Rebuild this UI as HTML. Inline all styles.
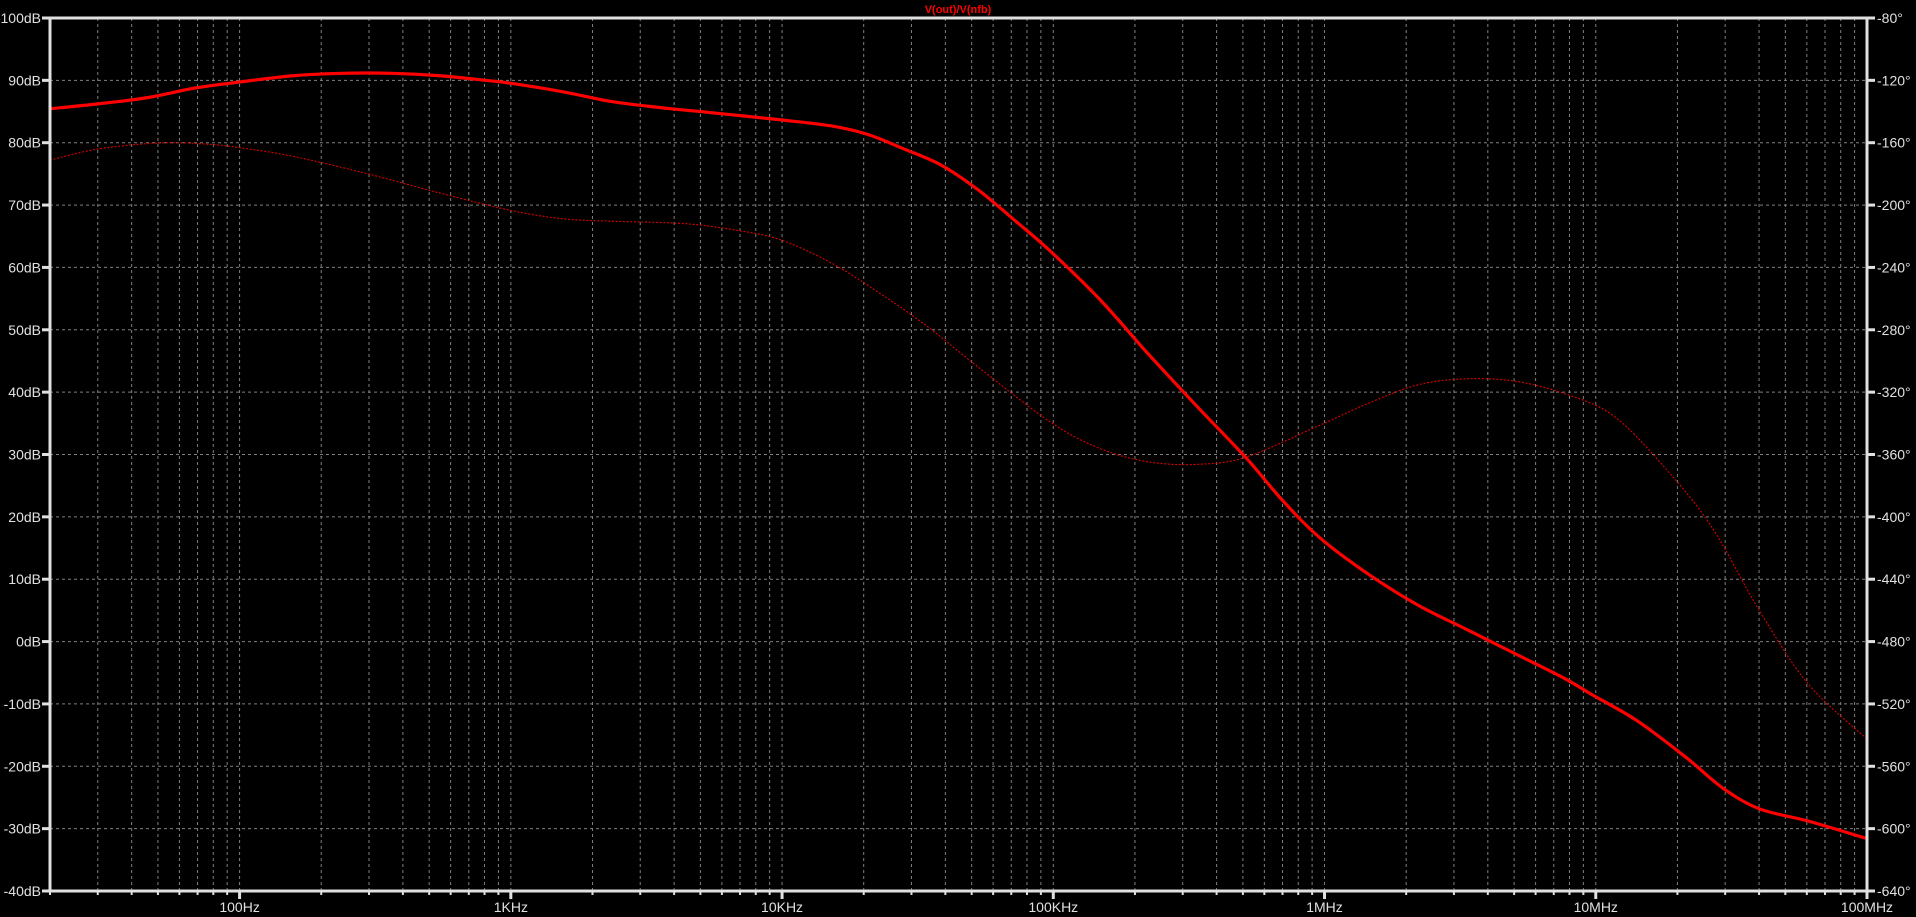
<!DOCTYPE html>
<html><head><meta charset="utf-8"><style>
html,body{margin:0;padding:0;background:#000;overflow:hidden}
svg{display:block}
text{font-family:"Liberation Sans",sans-serif;font-size:14px;fill:#e0e0e0}
</style></head><body>
<svg id="s" width="1916" height="917" xmlns="http://www.w3.org/2000/svg">
<rect width="1916" height="917" fill="#000"/>
<g id="grid"></g>
<g transform="scale(1.22194)">
<path id="ph" fill="none" stroke="#e00000" stroke-width="0.9" stroke-dasharray="1.6,1.4"/>
<path id="mg" fill="none" stroke="#ff0000" stroke-width="2.6" stroke-linejoin="round" stroke-linecap="round"/>
</g>
<text x="958" y="13" text-anchor="middle" style="fill:#ff0000;font-size:11px;font-weight:bold">V(out)/V(nfb)</text>
<g id="axes"></g>
</svg>
<script>
var NS="http://www.w3.org/2000/svg";
function smooth(s){var p=s.trim().split(/\s+/).map(function(q){return q.split(',').map(Number)});
 var d='M'+p[0][0]+','+p[0][1];
 for(var i=0;i<p.length-1;i++){var p0=p[i-1]||p[i],p1=p[i],p2=p[i+1],p3=p[i+2]||p2;
  var c1x=p1[0]+(p2[0]-p0[0])/6,c1y=p1[1]+(p2[1]-p0[1])/6,c2x=p2[0]-(p3[0]-p1[0])/6,c2y=p2[1]-(p3[1]-p1[1])/6;
  d+=' C'+c1x+','+c1y+' '+c2x+','+c2y+' '+p2[0]+','+p2[1];}
 return d;}
document.getElementById('ph').setAttribute('d',smooth("41,131 80,122 130,117 170,118 197,121 240,128 300,142 360,158 417,172 460,179 500,181 560,183 600,188 638,196 680,215 720,240 760,268 800,300 859,345 900,367 940,378 980,380 1020,374 1080,348 1120,330 1160,315 1200,310 1240,312 1280,322 1320,340 1360,380 1400,430 1440,500 1480,560 1527,604"));
document.getElementById('mg').setAttribute('d',smooth("41,89 80,85 120,80 160,72 197,67 240,62 280,60 320,60 360,62 400,66 417,68 460,75 500,83 540,88 580,92 638,98 680,103 710,110 740,122 770,135 800,155 830,180 859,205 900,245 940,290 980,333 1020,375 1050,410 1080,440 1120,470 1160,495 1200,515 1240,535 1280,555 1302,568 1340,590 1380,620 1410,645 1440,662 1480,672 1527,686"));
var x0=50,x1=1867,y0=18,y1=891;
var g=document.getElementById('grid'),a=document.getElementById('axes');
function el(p,t,at,txt){var e=document.createElementNS(NS,t);for(var k in at)e.setAttribute(k,at[k]);if(txt)e.textContent=txt;p.appendChild(e);return e;}
var ppd=(x1-x0)/Math.log10(100e6/20);
function X(f){return x0+Math.log10(f/20)*ppd;}
var names={2:'100Hz',3:'1KHz',4:'10KHz',5:'100KHz',6:'1MHz',7:'10MHz',8:'100MHz'};
for(var d=1;d<=8;d++){for(var m=1;m<10;m++){var f=m*Math.pow(10,d);if(f<20||f>100e6)continue;var x=X(f);
 if(f>20&&f<100e6) el(g,'line',{x1:x,y1:y0,x2:x,y2:y1,stroke:'#808080','stroke-width':1,'stroke-dasharray':'3,3'});
 el(a,'line',{x1:x,y1:y1,x2:x,y2:y1+(m==1?8:4),stroke:'#e0e0e0','stroke-width':m==1?3:2});
 if(m==1) el(a,'text',{x:x,y:912,'text-anchor':'middle'},names[d]);
}}
var dy=(y1-y0)/14;
for(var i=0;i<=14;i++){var y=y0+i*dy;
 if(i>0&&i<14) el(g,'line',{x1:x0,y1:y,x2:x1,y2:y,stroke:'#808080','stroke-width':1,'stroke-dasharray':'3,3'});
 el(a,'line',{x1:x0-8,y1:y,x2:x0,y2:y,stroke:'#e0e0e0','stroke-width':3});
 el(a,'line',{x1:x1,y1:y,x2:x1+8,y2:y,stroke:'#e0e0e0','stroke-width':3});
 el(a,'text',{x:x0-9,y:y+5,'text-anchor':'end'},(100-10*i)+'dB');
 el(a,'text',{x:x1+10,y:y+5},'-'+(80+40*i)+'\u00b0');
}
el(a,'rect',{x:x0,y:y0,width:x1-x0,height:y1-y0,fill:'none',stroke:'#e0e0e0','stroke-width':3});
</script>
</body></html>
